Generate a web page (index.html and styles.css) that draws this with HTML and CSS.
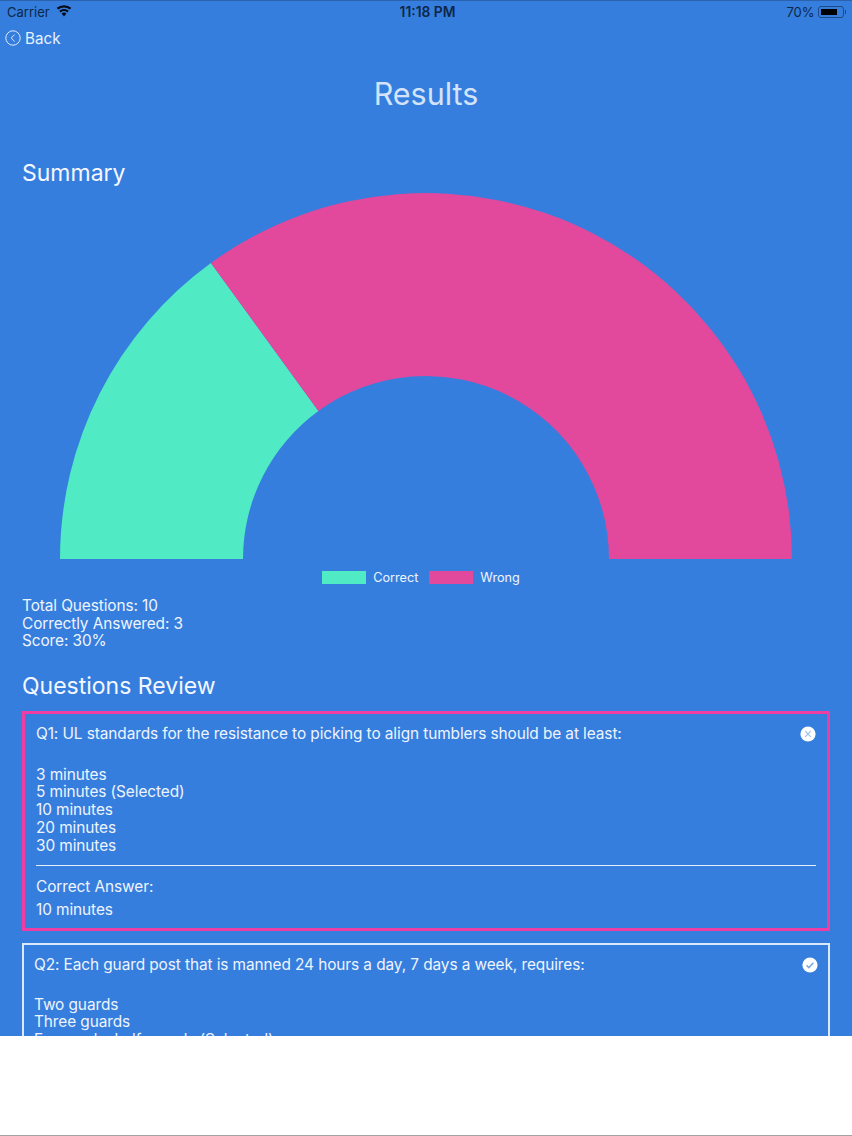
FILE: index.html
```html
<!DOCTYPE html>
<html>
<head>
<meta charset="utf-8" />
<title>Results</title>
<link rel="stylesheet" href="styles.css">
</head>
<body>
<div class="screen">
	<div class="status">
		<div class="status-left">
			<span>Carrier</span>
			<svg class="wifi" width="16" height="12" viewBox="0 0 16 12"><path d="M8 11.5 5.6 8.6a3.7 3.7 0 0 1 4.8 0z"/><path d="M4.6 7.4 3.2 5.7a7.5 7.5 0 0 1 9.6 0l-1.4 1.7a5.3 5.3 0 0 0-6.8 0z"/><path d="M2.2 4.5.7 2.8a11.3 11.3 0 0 1 14.6 0l-1.5 1.7a9 9 0 0 0-11.6 0z"/></svg>
		</div>
		<div class="status-time">11:18 PM</div>
		<div class="status-right">
			<span>70%</span>
			<div class="battery"><div class="battery-fill"></div></div>
			<div class="battery-tip"></div>
		</div>
	</div>
	<div class="nav">
		<svg width="16" height="16" viewBox="0 0 16 16" fill="none" stroke="#dce9fb"><circle cx="8" cy="8" r="7.2"/><path d="M9.6 4.6 6.2 8l3.4 3.4"/></svg>
		<span>Back</span>
	</div>
	<h1 class="title">Results</h1>
	<h2 class="heading summary">Summary</h2>
	<svg class="chart" width="852" height="366" viewBox="0 0 852 366">
		<path fill="#50ebc5" d="M60 366A366 366 0 0 1 210.9 70L318.4 218A183 183 0 0 0 243 366Z"/>
		<path fill="#e2489b" d="M210.9 70A366 366 0 0 1 792 366H609A183 183 0 0 0 318.4 218Z"/>
	</svg>
	<div class="legend">
		<span class="swatch correct"></span><span class="legend-label">Correct</span>
		<span class="swatch wrong"></span><span class="legend-label">Wrong</span>
	</div>
	<div class="stats">
		Total Questions: 10<br>
		Correctly Answered: 3<br>
		Score: 30%
	</div>
	<h2 class="heading review">Questions Review</h2>
	<div class="card card-wrong">
		<div class="question">
			<span>Q1: UL standards for the resistance to picking to align tumblers should be at least:</span>
			<svg class="mark" width="16" height="16" viewBox="0 0 16 16"><circle cx="8" cy="8" r="7.6" fill="#fff"/><path d="M5.2 5.2l5.6 5.6M10.8 5.2l-5.6 5.6" stroke="#9dbdec" stroke-width="1.2"/></svg>
		</div>
		<div class="options">
			3 minutes<br>
			5 minutes (Selected)<br>
			10 minutes<br>
			20 minutes<br>
			30 minutes
		</div>
		<div class="divider"></div>
		<div class="answer-label">Correct Answer:</div>
		<div class="answer">10 minutes</div>
	</div>
	<div class="card card-right">
		<div class="question">
			<span>Q2: Each guard post that is manned 24 hours a day, 7 days a week, requires:</span>
			<svg class="mark" width="16" height="16" viewBox="0 0 16 16"><circle cx="8" cy="8" r="7.6" fill="#fff"/><path d="M4.6 8.4l2.3 2.2 4.5-4.8" fill="none" stroke="#7fa8e6" stroke-width="1.6"/></svg>
		</div>
		<div class="options">
			Two guards<br>
			Three guards<br>
			Four and a half guards (Selected)<br>
			Five guards
		</div>
	</div>
</div>
<div class="blank"></div>
</body>
</html>
```
FILE: styles.css
```css
*{ margin:0; padding:0; box-sizing:border-box; }
body{ background:#fff; font-family:Inter, "Liberation Sans", sans-serif; color:#eef4fd; }
.screen{ height:1036px; overflow:hidden; background:#367ede; border-top:1px solid #2a62ad; }
.blank{ height:100px; border-bottom:1px solid #a3a3a3; }

.status{ display:flex; justify-content:space-between; align-items:center; height:22px; padding:0 6px 0 7px; font-size:13px; color:#0d2747; }
.status-left{ display:flex; align-items:center; gap:6px; width:200px; }
.wifi{ fill:#050b14; margin-top:-3px; }
.status-time{ margin-left:2px; font-size:13.8px; font-weight:600; }
.status-right{ display:flex; align-items:center; justify-content:flex-end; width:200px; }
.battery{ width:26px; height:12px; margin-left:3px; padding:2px; border:1px solid #1e4a85; border-radius:3px; }
.battery-fill{ width:16px; height:100%; background:#000; }
.battery-tip{ width:1.5px; height:4px; margin-left:1px; background:#1e4a85; }

.nav{ display:flex; align-items:center; gap:4px; height:30px; padding-left:5px; font-size:15.2px; color:#e6f0fd; }

.title{ margin-top:21px; font-size:30.5px; line-height:40px; font-weight:400; text-align:center; color:#d3e3f9; }
.heading{ padding-left:22px; font-size:23px; font-weight:400; line-height:30px; color:#f4f8fe; }
.summary{ margin-top:44px; }
.chart{ display:block; margin-top:5px; }

.legend{ display:flex; align-items:center; justify-content:center; height:38px; padding:0 10px 2px 0; font-size:12.7px; color:#f0f5fd; }
.swatch{ width:44px; height:13px; margin-right:7px; }
.swatch.correct{ background:#50ebc5; }
.swatch.wrong{ background:#e2489b; }
.legend-label{ margin-right:11px; }
.legend-label:last-child{ margin-right:0; }

.stats{ padding-left:22px; font-size:15.4px; letter-spacing:-.1px; line-height:17.6px; }
.review{ margin-top:21px; }

.card{ margin:10px 22px 0; border:3px solid #ef3ea3; padding:11px 11px 0; font-size:15.4px; letter-spacing:-.085px; }
.card-wrong{ height:220px; }
.card-right{ margin-top:12px; border:2px solid #dce9fb; padding:11px 10px 0; }
.question{ display:flex; justify-content:space-between; align-items:center; height:18px; line-height:18px; }
.mark{ flex:none; }
.options{ margin-top:23px; line-height:17.7px; }
.card-right .options{ margin-top:22px; }
.divider{ height:1px; margin-top:11px; background:#e6f0fd; }
.answer-label{ margin-top:12px; line-height:18px; }
.answer{ margin-top:5px; line-height:18px; }
```
